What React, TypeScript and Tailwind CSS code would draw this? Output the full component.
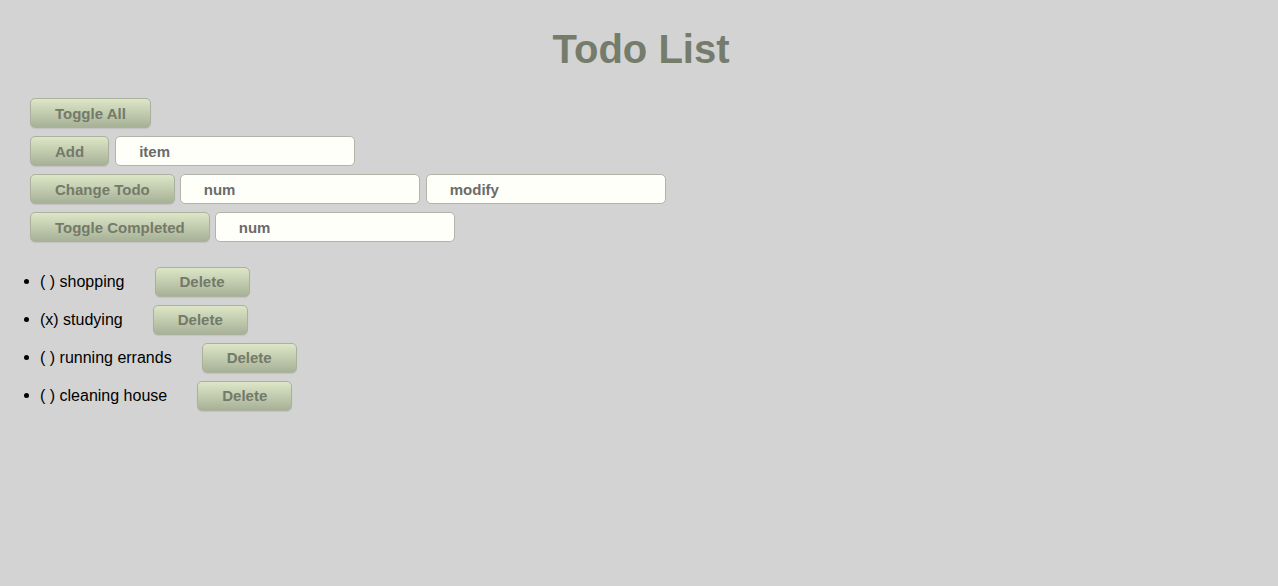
const todos = [
  { text: 'shopping', done: false },
  { text: 'studying', done: true },
  { text: 'running errands', done: false },
  { text: 'cleaning house', done: false },
];

const btn =
  "h-[30px] px-[24px] rounded-[5px] border border-[#aab29e] bg-[linear-gradient(to_bottom,#dde6c6,#a7b197)] text-[15px] font-bold text-[#737a69] shadow-[0_1px_1px_rgba(0,0,0,0.08)] font-['Liberation_Sans',Arial,sans-serif] leading-none";

const field =
  "h-[30px] w-[240px] rounded-[5px] border border-[#b3b3a8] bg-[#fffff9] pl-[23px] text-[15px] font-bold text-[#6b6b6b] placeholder:text-[#6b6b6b] outline-none font-['Liberation_Sans',Arial,sans-serif]";

const App = () => {
  return (
    <div className="min-h-[586px] w-full bg-[#d3d3d3] font-['Liberation_Sans',Arial,sans-serif]">
      {/* Title */}
      <h1 className="pt-[26px] pl-[4px] text-center text-[40px] leading-[46px] font-bold text-[#757c6c]">
        Todo List
      </h1>

      {/* Controls */}
      <div className="mt-[26px] flex flex-col gap-[8px] pl-[30px]">
        <div className="flex">
          <button className={btn}>Toggle All</button>
        </div>
        <div className="flex gap-[6px]">
          <button className={btn}>Add</button>
          <input className={field} placeholder="item" />
        </div>
        <div className="flex gap-[5px]">
          <button className={btn}>Change Todo</button>
          <input className={field} placeholder="num" />
          <input className={`${field} ml-[1px]`} placeholder="modify" />
        </div>
        <div className="flex gap-[5px]">
          <button className={btn}>Toggle Completed</button>
          <input className={field} placeholder="num" />
        </div>
      </div>

      {/* Todo list */}
      <ul className="mt-[20px] list-disc pl-[40px] text-[16px] text-black">
        {todos.map((t) => (
          <li key={t.text} className="h-[38px] py-[4px] leading-[30px]">
            <span className="align-middle">
              {t.done ? '(x)' : '( )'} {t.text}
            </span>
            <button className={`${btn} ml-[30px] w-[95px] px-0 align-middle`}>Delete</button>
          </li>
        ))}
      </ul>
    </div>
  );
};

export default App;
